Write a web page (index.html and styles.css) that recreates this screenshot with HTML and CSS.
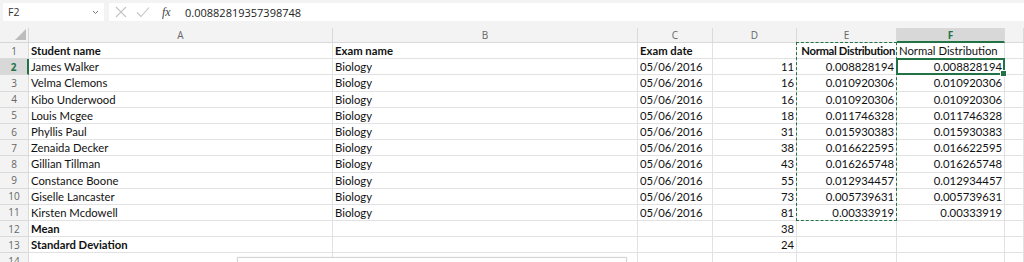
FILE: index.html
```html
<!DOCTYPE html>
<html lang="en">
<head>
<meta charset="UTF-8">
<title>Normal Distribution</title>
<link rel="stylesheet" href="styles.css">
</head>
<body>

<div class="toolbar">
<div class="namebox">
<span>F2</span>
<svg class="chev" width="7" height="5" viewBox="0 0 7 5"><path d="M1 1 L3.5 3.5 L6 1" fill="none" stroke="#777" stroke-width="1"/></svg>
</div>
<div class="fbar">
<div class="ficons">
<svg width="14" height="14" viewBox="0 0 14 14"><path d="M2 2 L12 12 M12 2 L2 12" stroke="#c4c4c4" stroke-width="1.1" fill="none"/></svg>
<svg width="16" height="14" viewBox="0 0 16 14"><path d="M2 7.5 L6 11.5 L14 2.5" stroke="#c4c4c4" stroke-width="1.1" fill="none"/></svg>
<span class="fx">fx</span>
</div>
<div class="formula">0.00882819357398748</div>
</div>
</div>

<div class="sheet">
<div class="corner"></div>
<div class="ch">A</div>
<div class="ch">B</div>
<div class="ch">C</div>
<div class="ch">D</div>
<div class="ch">E</div>
<div class="ch active">F</div>
<div class="ch"></div>

<div class="rh">1</div>
<div class="c b">Student name</div>
<div class="c b">Exam name</div>
<div class="c b">Exam date</div>
<div class="c"></div>
<div class="c b n tight">Normal Distribution</div>
<div class="c">Normal Distribution</div>
<div class="c"></div>

<div class="rh active">2</div>
<div class="c">James Walker</div>
<div class="c">Biology</div>
<div class="c">05/06/2016</div>
<div class="c n">11</div>
<div class="c n">0.008828194</div>
<div class="c n">0.008828194</div>
<div class="c"></div>

<div class="rh">3</div>
<div class="c">Velma Clemons</div>
<div class="c">Biology</div>
<div class="c">05/06/2016</div>
<div class="c n">16</div>
<div class="c n">0.010920306</div>
<div class="c n">0.010920306</div>
<div class="c"></div>

<div class="rh">4</div>
<div class="c">Kibo Underwood</div>
<div class="c">Biology</div>
<div class="c">05/06/2016</div>
<div class="c n">16</div>
<div class="c n">0.010920306</div>
<div class="c n">0.010920306</div>
<div class="c"></div>

<div class="rh">5</div>
<div class="c">Louis Mcgee</div>
<div class="c">Biology</div>
<div class="c">05/06/2016</div>
<div class="c n">18</div>
<div class="c n">0.011746328</div>
<div class="c n">0.011746328</div>
<div class="c"></div>

<div class="rh">6</div>
<div class="c">Phyllis Paul</div>
<div class="c">Biology</div>
<div class="c">05/06/2016</div>
<div class="c n">31</div>
<div class="c n">0.015930383</div>
<div class="c n">0.015930383</div>
<div class="c"></div>

<div class="rh">7</div>
<div class="c">Zenaida Decker</div>
<div class="c">Biology</div>
<div class="c">05/06/2016</div>
<div class="c n">38</div>
<div class="c n">0.016622595</div>
<div class="c n">0.016622595</div>
<div class="c"></div>

<div class="rh">8</div>
<div class="c">Gillian Tillman</div>
<div class="c">Biology</div>
<div class="c">05/06/2016</div>
<div class="c n">43</div>
<div class="c n">0.016265748</div>
<div class="c n">0.016265748</div>
<div class="c"></div>

<div class="rh">9</div>
<div class="c">Constance Boone</div>
<div class="c">Biology</div>
<div class="c">05/06/2016</div>
<div class="c n">55</div>
<div class="c n">0.012934457</div>
<div class="c n">0.012934457</div>
<div class="c"></div>

<div class="rh">10</div>
<div class="c">Giselle Lancaster</div>
<div class="c">Biology</div>
<div class="c">05/06/2016</div>
<div class="c n">73</div>
<div class="c n">0.005739631</div>
<div class="c n">0.005739631</div>
<div class="c"></div>

<div class="rh">11</div>
<div class="c">Kirsten Mcdowell</div>
<div class="c">Biology</div>
<div class="c">05/06/2016</div>
<div class="c n">81</div>
<div class="c n">0.00333919</div>
<div class="c n">0.00333919</div>
<div class="c"></div>

<div class="rh">12</div>
<div class="c b">Mean</div>
<div class="c"></div>
<div class="c"></div>
<div class="c n">38</div>
<div class="c"></div>
<div class="c"></div>
<div class="c"></div>

<div class="rh">13</div>
<div class="c b">Standard Deviation</div>
<div class="c"></div>
<div class="c"></div>
<div class="c n">24</div>
<div class="c"></div>
<div class="c"></div>
<div class="c"></div>

<div class="rh">14</div>
<div class="c"></div>
<div class="c"></div>
<div class="c"></div>
<div class="c"></div>
<div class="c"></div>
<div class="c"></div>
<div class="c"></div>

<!-- copy range and active cell, drawn over the grid -->
<div class="ants"></div>
<div class="sel"></div>
</div>

<div class="popup"></div>

</body>
</html>
```

FILE: styles.css
```css
body {
margin: 0;
background: #fff;
font-family: Lato, "Open Sans", sans-serif;
overflow: hidden;
}
.toolbar {
display: flex;
gap: 5px;
height: 28px;
box-sizing: border-box;
padding: 3px 0 7px 3px;
background: #f3f3f3;
}
.namebox {
width: 101px;
display: flex;
align-items: center;
justify-content: space-between;
padding: 0 5px;
box-sizing: border-box;
background: #fff;
font-family: "Open Sans", sans-serif;
font-size: 10.5px;
color: #333;
}
.fbar {
flex: 1;
display: flex;
align-items: center;
background: #fff;
}
.ficons {
display: flex;
align-items: center;
gap: 7px;
width: 76px;
padding-left: 5px;
box-sizing: border-box;
}
.fx {
font-family: "Liberation Serif", serif;
font-style: italic;
font-size: 12px;
color: #444;
margin-left: 4px;
}
.formula {
font-family: "Open Sans", sans-serif;
font-size: 11px;
color: #222;
}
.sheet {
position: relative;
display: grid;
grid-template-columns: 29px 304px 305px 75px 84px 100px 108px 1fr;
grid-template-rows: 15px;
grid-auto-rows: 16.2px;
font-size: 11.3px;
color: #111;
}
.corner {
position: relative;
background: #f3f3f3;
border-right: 1px solid #d6d6d6;
border-bottom: 1px solid #d6d6d6;
}
.corner::after {
content: "";
position: absolute;
right: 2px;
bottom: 2px;
width: 11px;
height: 11px;
background: #bcbcbc;
clip-path: polygon(100% 0, 100% 100%, 0 100%);
}
.ch, .rh {
background: #f3f3f3;
color: #666;
font-family: "Open Sans", sans-serif;
font-size: 10px;
display: flex;
align-items: center;
justify-content: center;
border-right: 1px solid #dadada;
border-bottom: 1px solid #dadada;
box-sizing: border-box;
}
.ch.active {
background: #d8d8d8;
color: #217346;
font-weight: bold;
border-bottom: 2px solid #217346;
}
.rh.active {
background: #d8d8d8;
color: #217346;
font-weight: bold;
border-right: 2px solid #217346;
}
.c {
display: flex;
align-items: center;
padding: 0 2px;
white-space: nowrap;
overflow: hidden;
border-right: 1px solid #e2e2e2;
border-bottom: 1px solid #e2e2e2;
box-sizing: border-box;
}
.b {
font-weight: bold;
}
.n {
justify-content: flex-end;
}
.tight {
letter-spacing: -0.35px;
padding: 0 1px;
}
/* absolutely placed in their grid areas, so they take no cells */
.ants {
position: absolute;
inset: -1px 0 0 -1px;
grid-column: 6 / 7;
grid-row: 2 / 13;
border: 1px dashed #217346;
pointer-events: none;
}
.sel {
position: absolute;
inset: -1px 0 0 -1px;
grid-column: 7 / 8;
grid-row: 3 / 4;
border: 2px solid #217346;
pointer-events: none;
}
.sel::after {
content: "";
position: absolute;
right: -4px;
bottom: -4px;
width: 5px;
height: 5px;
background: #217346;
border: 1px solid #fff;
}
.popup {
position: absolute;
left: 237px;
top: 257px;
width: 388px;
height: 20px;
background: #fff;
border: 1px solid #d4d4d4;
box-shadow: 0 0 2px rgba(0,0,0,0.08);
}
```
